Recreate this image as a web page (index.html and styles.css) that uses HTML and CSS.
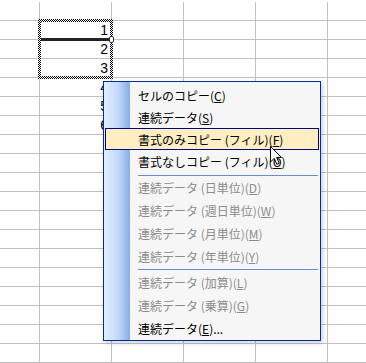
FILE: index.html
```html
<!DOCTYPE html>
<html lang="ja">
<head>
    <meta charset="UTF-8">
    <title>オートフィル オプション</title>
    <link rel="stylesheet" href="styles.css">
</head>
<body>
    <div class="sheet">
        <div class="col-b">
            <div class="cell">1</div>
            <div class="cell">2</div>
            <div class="cell">3</div>
            <div class="cell">4</div>
            <div class="cell">5</div>
            <div class="cell">6</div>
        </div>
    </div>

    <!-- copy range (marching ants) and drag border -->
    <div class="marquee"></div>
    <div class="drag-line"><span class="drag-handle"></span></div>

    <div class="menu">
        <div class="item">セルのコピー(<u>C</u>)</div>
        <div class="item">連続データ(<u>S</u>)</div>
        <div class="item active">書式のみコピー (フィル)(<u>F</u>)</div>
        <div class="item">書式なしコピー (フィル)(<u>O</u>)</div>
        <div class="sep"></div>
        <div class="item tall disabled">連続データ (日単位)(<u>D</u>)</div>
        <div class="item tall disabled">連続データ (週日単位)(<u>W</u>)</div>
        <div class="item tall disabled">連続データ (月単位)(<u>M</u>)</div>
        <div class="item tall disabled">連続データ (年単位)(<u>Y</u>)</div>
        <div class="sep narrow"></div>
        <div class="item tall disabled">連続データ (加算)(<u>L</u>)</div>
        <div class="item tall disabled">連続データ (乗算)(<u>G</u>)</div>
        <div class="item tall">連続データ(<u>E</u>)...</div>
    </div>

    <svg class="cursor" width="13" height="20" viewBox="0 0 13 20">
        <path d="M0.5 0.5 L0.5 16 L4.3 12.3 L6.8 18.3 L9.2 17.3 L6.7 11.4 L11.5 11.4 Z" fill="#fff" stroke="#000" stroke-width="1"/>
    </svg>
</body>
</html>
```

FILE: styles.css
```css
:root {
    --grid: #c0c0c0;
    --menu-border: #002d96;
    --menu-bg: #f6f6f6;
    --hot-border: #000080;
    --hot-bg: #ffeec2;
    --sep: #6a8ccb;
    --disabled: #8d8d8d;
}

* {
    margin: 0;
    padding: 0;
    box-sizing: border-box;
}

body {
    width: 366px;
    height: 363px;
    overflow: hidden;
    position: relative;
    background: #fff;
    padding-top: 2px;
}

.sheet {
    height: 361px;
    padding-top: 19px;
    background-image:
        linear-gradient(to right, var(--grid) 1px, transparent 1px),
        linear-gradient(to bottom, var(--grid) 1px, transparent 1px);
    background-size: 72px 19px;
    background-position: 39px 18px;
}

.col-b {
    margin-left: 40px;
    width: 71px;
}

.cell {
    height: 19px;
    line-height: 18px;
    padding-right: 3px;
    text-align: right;
    font-family: 'Liberation Sans', Arial, sans-serif;
    font-size: 14px;
    color: #000;
}

.marquee {
    position: absolute;
    left: 38px;
    top: 19px;
    width: 75px;
    height: 60px;
    padding: 3px;
    background: repeating-conic-gradient(#000 0 25%, #fff 0 50%) 0 0 / 2px 2px;
    -webkit-mask: linear-gradient(#000 0 0) content-box, linear-gradient(#000 0 0);
    -webkit-mask-composite: xor;
    mask-composite: exclude;
}

.drag-line {
    position: absolute;
    left: 41px;
    top: 38px;
    width: 68px;
    height: 3px;
    background: #222;
}

.drag-handle {
    position: absolute;
    right: -5px;
    top: -2px;
    width: 5px;
    height: 7px;
    border: 1px solid #333;
    border-radius: 2px;
    background: #fff;
}

.menu {
    position: absolute;
    left: 103px;
    top: 81px;
    width: 218px;
    height: 260px;
    padding-top: 2px;
    border: 1px solid var(--menu-border);
    background: linear-gradient(to right, #e3efff 0, #c4d9f8 14px, #87ade4 26px, var(--menu-bg) 26px);
    box-shadow: 2px 2px 4px rgba(60, 80, 120, 0.25);
    font-family: 'Noto Sans CJK JP', sans-serif;
    font-size: 12px;
}

.item {
    display: flex;
    align-items: center;
    height: 22px;
    padding-left: 34px;
    color: #000;
    white-space: nowrap;
}

.item.tall {
    height: 23px;
}

.item.disabled {
    color: var(--disabled);
}

.item.active {
    margin: 0 1px;
    padding-left: 32px;
    border: 1px solid var(--hot-border);
    background: var(--hot-bg);
}

.item u {
    text-underline-offset: 1px;
}

.sep {
    height: 1px;
    margin: 3px 2px 0 34px;
    background: var(--sep);
}

.sep.narrow {
    margin: 1px 2px 1px 34px;
}

.cursor {
    position: absolute;
    left: 270px;
    top: 146px;
}
```
